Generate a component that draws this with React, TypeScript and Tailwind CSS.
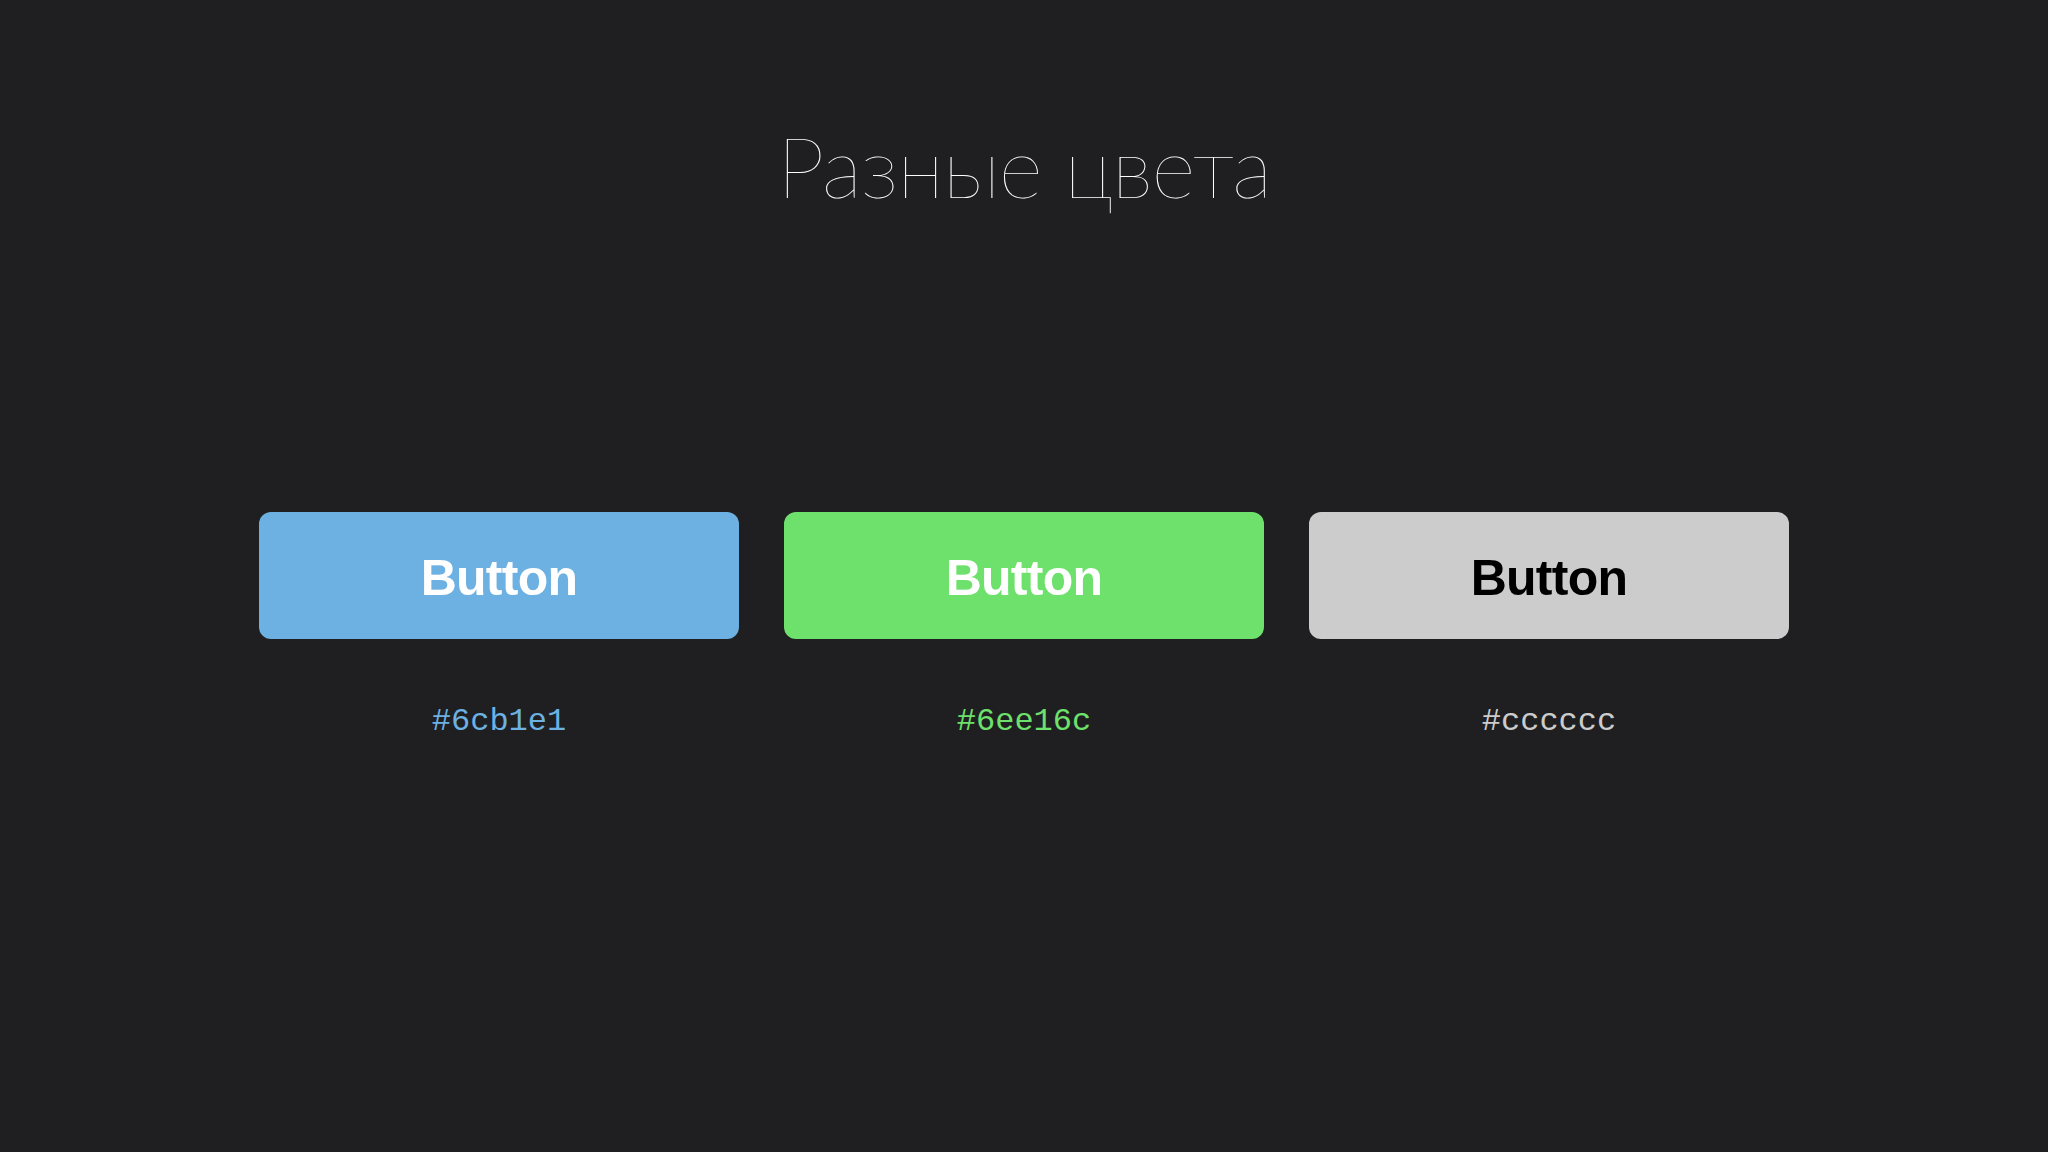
const swatches = [
  { hex: '#6cb1e1', btn: 'bg-[#6cb1e1] text-white', label: 'text-[#6cb1e1]' },
  { hex: '#6ee16c', btn: 'bg-[#6ee16c] text-white', label: 'text-[#6ee16c]' },
  { hex: '#cccccc', btn: 'bg-[#cccccc] text-black', label: 'text-[#cccccc]' },
];

export default function App() {
  return (
    <div className="w-[2048px] h-[1152px] bg-[#1f1f21] flex flex-col items-center overflow-hidden">
      <h1
        className="mt-[106px] h-[120px] flex items-center text-[85px] font-thin text-white tracking-[-0.015em]"
        style={{ fontFamily: 'Lato, "Open Sans", sans-serif', fontWeight: 100 }}
      >
        Разные цвета
      </h1>
      <div className="mt-[286px] flex gap-[45px]">
        {swatches.map((s) => (
          <div key={s.hex} className="flex flex-col items-center">
            <button
              className={`w-[480px] h-[127px] pt-[5px] rounded-[12px] flex items-center justify-center text-[50px] font-bold tracking-[-0.015em] ${s.btn}`}
              style={{ fontFamily: '"Liberation Sans", Arial, sans-serif' }}
            >
              Button
            </button>
            <div
              className={`mt-[67px] text-[32px] leading-none ${s.label}`}
              style={{ fontFamily: '"Liberation Mono", "Courier New", monospace' }}
            >
              {s.hex}
            </div>
          </div>
        ))}
      </div>
    </div>
  );
}
